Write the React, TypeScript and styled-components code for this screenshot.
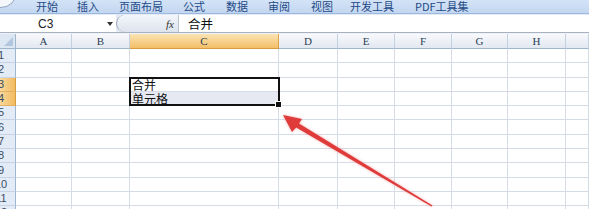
import React from "react";
import styled, { createGlobalStyle } from "styled-components";

const Global = createGlobalStyle`
  html, body { margin: 0; padding: 0; background: #ffffff; }
  body { font-family: "Liberation Sans", "Noto Sans CJK SC", sans-serif; }
  #root { width: 589px; height: 209px; }
`;

const Page = styled.div`
  position: relative;
  width: 589px;
  height: 209px;
  overflow: hidden;
  display: flex;
  flex-direction: column;
  background: #fff;
  & > * { flex: none; }
`;

const TabBar = styled.div`
  height: 13px;
  display: flex;
  align-items: flex-start;
  background: linear-gradient(#d3e3f7, #c4d7f0);
  border-bottom: 1px solid #9ab8e0;
  overflow: hidden;
`;

const OfficeOrb = styled.div`
  width: 16px;
  height: 13px;
  flex: none;
  overflow: hidden;
`;

const OrbEdge = styled.div`
  width: 30px;
  height: 30px;
  border-radius: 50%;
  margin-left: -15px;
  margin-top: -24px;
  background: #f4f7fb;
  border: 1px solid #8fa3bd;
`;

const Tab = styled.span<{ $left: number }>`
  margin-left: ${(p) => p.$left}px;
  font-family: "Noto Sans CJK SC", sans-serif;
  font-size: 11px;
  line-height: 12px;
  color: #244a86;
  white-space: nowrap;
  flex: none;
`;

const FormulaStrip = styled.div`
  height: 17px;
  padding-top: 1px;
  display: flex;
  background: #e4ebf5;
  border-bottom: 1px solid #a7b1bf;
`;

const NameBox = styled.div`
  width: 104px;
  background: #fff;
  display: flex;
  align-items: center;
  padding-left: 38px;
  box-sizing: border-box;
  font-size: 12px;
  color: #222;
`;

const DropArrow = styled.div`
  width: 12px;
  background: #fff;
  display: flex;
  align-items: center;
  justify-content: center;
  &::after {
    content: "";
    border-left: 3px solid transparent;
    border-right: 3px solid transparent;
    border-top: 4px solid #333;
  }
`;

const FxArea = styled.div`
  width: 62px;
  display: flex;
  align-items: center;
  justify-content: flex-end;
  padding-right: 4px;
  box-sizing: border-box;
  background: linear-gradient(#f3f6fa, #dde4ee);
  border-radius: 9px 0 0 9px;
  border-left: 1px solid #9aa6b8;
  font-family: "Liberation Serif", serif;
  font-style: italic;
  font-size: 11px;
  color: #333;
`;

const FormulaInput = styled.div`
  flex: 1;
  background: #fff;
  border-left: 1px solid #b8c3d2;
  display: flex;
  align-items: center;
  padding-left: 9px;
  font-family: "Noto Sans CJK SC", sans-serif;
  font-size: 12.5px;
  color: #111;
`;

const Spacer = styled.div`
  height: 1px;
  background: #eef2f8;
`;

const Sheet = styled.div`
  display: grid;
  grid-template-columns: 16px 56px 58px 149px 59px 57px 57px 56px 58px 1fr;
  grid-template-rows: 15px repeat(12, 14.3px);
`;

type Pos = { $r: number; $c: number };

const Corner = styled.div`
  grid-row: 1;
  grid-column: 1;
  background: #dde7f4;
  border-right: 1px solid #9eb6ce;
  border-bottom: 1px solid #9eb6ce;
  display: flex;
  align-items: flex-end;
  justify-content: flex-end;
  padding: 2px;
  box-sizing: border-box;
  &::after {
    content: "";
    border-left: 9px solid transparent;
    border-bottom: 9px solid #b3c6de;
  }
`;

const ColHead = styled.div<{ $sel?: boolean; $c: number }>`
  grid-row: 1;
  grid-column: ${(p) => p.$c};
  background: ${(p) =>
    p.$sel
      ? "linear-gradient(#fbe4b4, #f3bf67)"
      : "linear-gradient(#f7f9fc, #e2e8f1)"};
  border-right: 1px solid ${(p) => (p.$sel ? "#e0a448" : "#c5d1df")};
  border-bottom: 1px solid ${(p) => (p.$sel ? "#d89c3f" : "#9eb6ce")};
  display: flex;
  align-items: center;
  justify-content: center;
  font-family: "Liberation Serif", serif;
  font-size: 11px;
  color: #2c3e55;
`;

const RowHead = styled.div<{ $sel?: boolean; $r: number }>`
  grid-row: ${(p) => p.$r};
  grid-column: 1;
  background: ${(p) =>
    p.$sel ? "linear-gradient(90deg, #f9d99b, #f2bb62)" : "#e3ebf6"};
  border-right: 1px solid ${(p) => (p.$sel ? "#d89c3f" : "#9eb6ce")};
  border-bottom: 1px solid ${(p) => (p.$sel ? "#e4b064" : "#c5d3e4")};
  overflow: hidden;
  display: flex;
  align-items: center;
  justify-content: center;
  font-size: 11px;
  color: #3a4d66;
`;

const RowNum = styled.span`
  width: 24px;
  flex: none;
  margin-left: -13px;
  text-align: center;
  line-height: 11px;
`;

const Cell = styled.div<Pos & { $tint?: boolean }>`
  grid-row: ${(p) => p.$r};
  grid-column: ${(p) => p.$c};
  background: ${(p) => (p.$tint ? "#e6e9f2" : "#fff")};
  border-right: 1px solid #d6dce6;
  border-bottom: 1px solid #d6dce6;
  display: flex;
  align-items: center;
  padding-left: 2px;
  font-family: "Noto Sans CJK SC", sans-serif;
  font-size: 12px;
  line-height: 13px;
  color: #111;
  white-space: nowrap;
  overflow: hidden;
  box-sizing: border-box;
`;

const Selection = styled.div`
  grid-column: 4;
  grid-row: 4 / span 2;
  border: 2px solid #111;
  margin: -1px -1px 0 -1px;
  position: relative;
  pointer-events: none;
  box-sizing: border-box;
  z-index: 1;
`;

const FillHandle = styled.div`
  position: absolute;
  right: -4px;
  bottom: -4px;
  width: 5px;
  height: 5px;
  background: #111;
  border: 1px solid #fff;
`;

const ArrowLayer = styled.svg`
  position: absolute;
  left: 0;
  top: 0;
  pointer-events: none;
`;

const cols = ["A", "B", "C", "D", "E", "F", "G", "H", ""];
const cellText: Record<string, string> = { "3-2": "合并", "4-2": "单元格" };

export default function App() {
  const rows = Array.from({ length: 12 }, (_, i) => i + 1);
  return (
    <>
      <Global />
      <Page>
        <TabBar>
          <OfficeOrb>
            <OrbEdge />
          </OfficeOrb>
          <Tab $left={20}>开始</Tab>
          <Tab $left={19}>插入</Tab>
          <Tab $left={20}>页面布局</Tab>
          <Tab $left={20}>公式</Tab>
          <Tab $left={21}>数据</Tab>
          <Tab $left={20}>审阅</Tab>
          <Tab $left={21}>视图</Tab>
          <Tab $left={17}>开发工具</Tab>
          <Tab $left={21}>PDF工具集</Tab>
        </TabBar>
        <FormulaStrip>
          <NameBox>C3</NameBox>
          <DropArrow />
          <FxArea>fx</FxArea>
          <FormulaInput>合并</FormulaInput>
        </FormulaStrip>
        <Spacer />
        <Sheet>
          <Corner />
          {cols.map((c, i) => (
            <ColHead key={"h" + i} $c={i + 2} $sel={c === "C"}>
              {c}
            </ColHead>
          ))}
          {rows.map((r) => (
            <React.Fragment key={r}>
              <RowHead $r={r + 1} $sel={r === 3 || r === 4}>
                <RowNum>{r}</RowNum>
              </RowHead>
              {cols.map((_, ci) => (
                <Cell key={ci} $r={r + 1} $c={ci + 2} $tint={r === 4 && ci === 2}>
                  {cellText[`${r}-${ci}`] ?? ""}
                </Cell>
              ))}
            </React.Fragment>
          ))}
          <Selection>
            <FillHandle />
          </Selection>
        </Sheet>
        <ArrowLayer width="589" height="209" viewBox="0 0 589 209">
          <defs>
            <filter id="glow" x="-20%" y="-20%" width="140%" height="140%">
              <feGaussianBlur stdDeviation="1.6" />
            </filter>
          </defs>
          <polygon
            points="283,115 302,119 299,123.4 432.5,205.5 431.5,206.5 296.2,127.6 292,132"
            fill="#f39a9a"
            opacity="0.8"
            filter="url(#glow)"
          />
          <polygon
            points="283,115 302,119 299,123.4 432.5,205.5 431.5,206.5 296.2,127.6 292,132"
            fill="#df3b3b"
          />
        </ArrowLayer>
      </Page>
    </>
  );
}
